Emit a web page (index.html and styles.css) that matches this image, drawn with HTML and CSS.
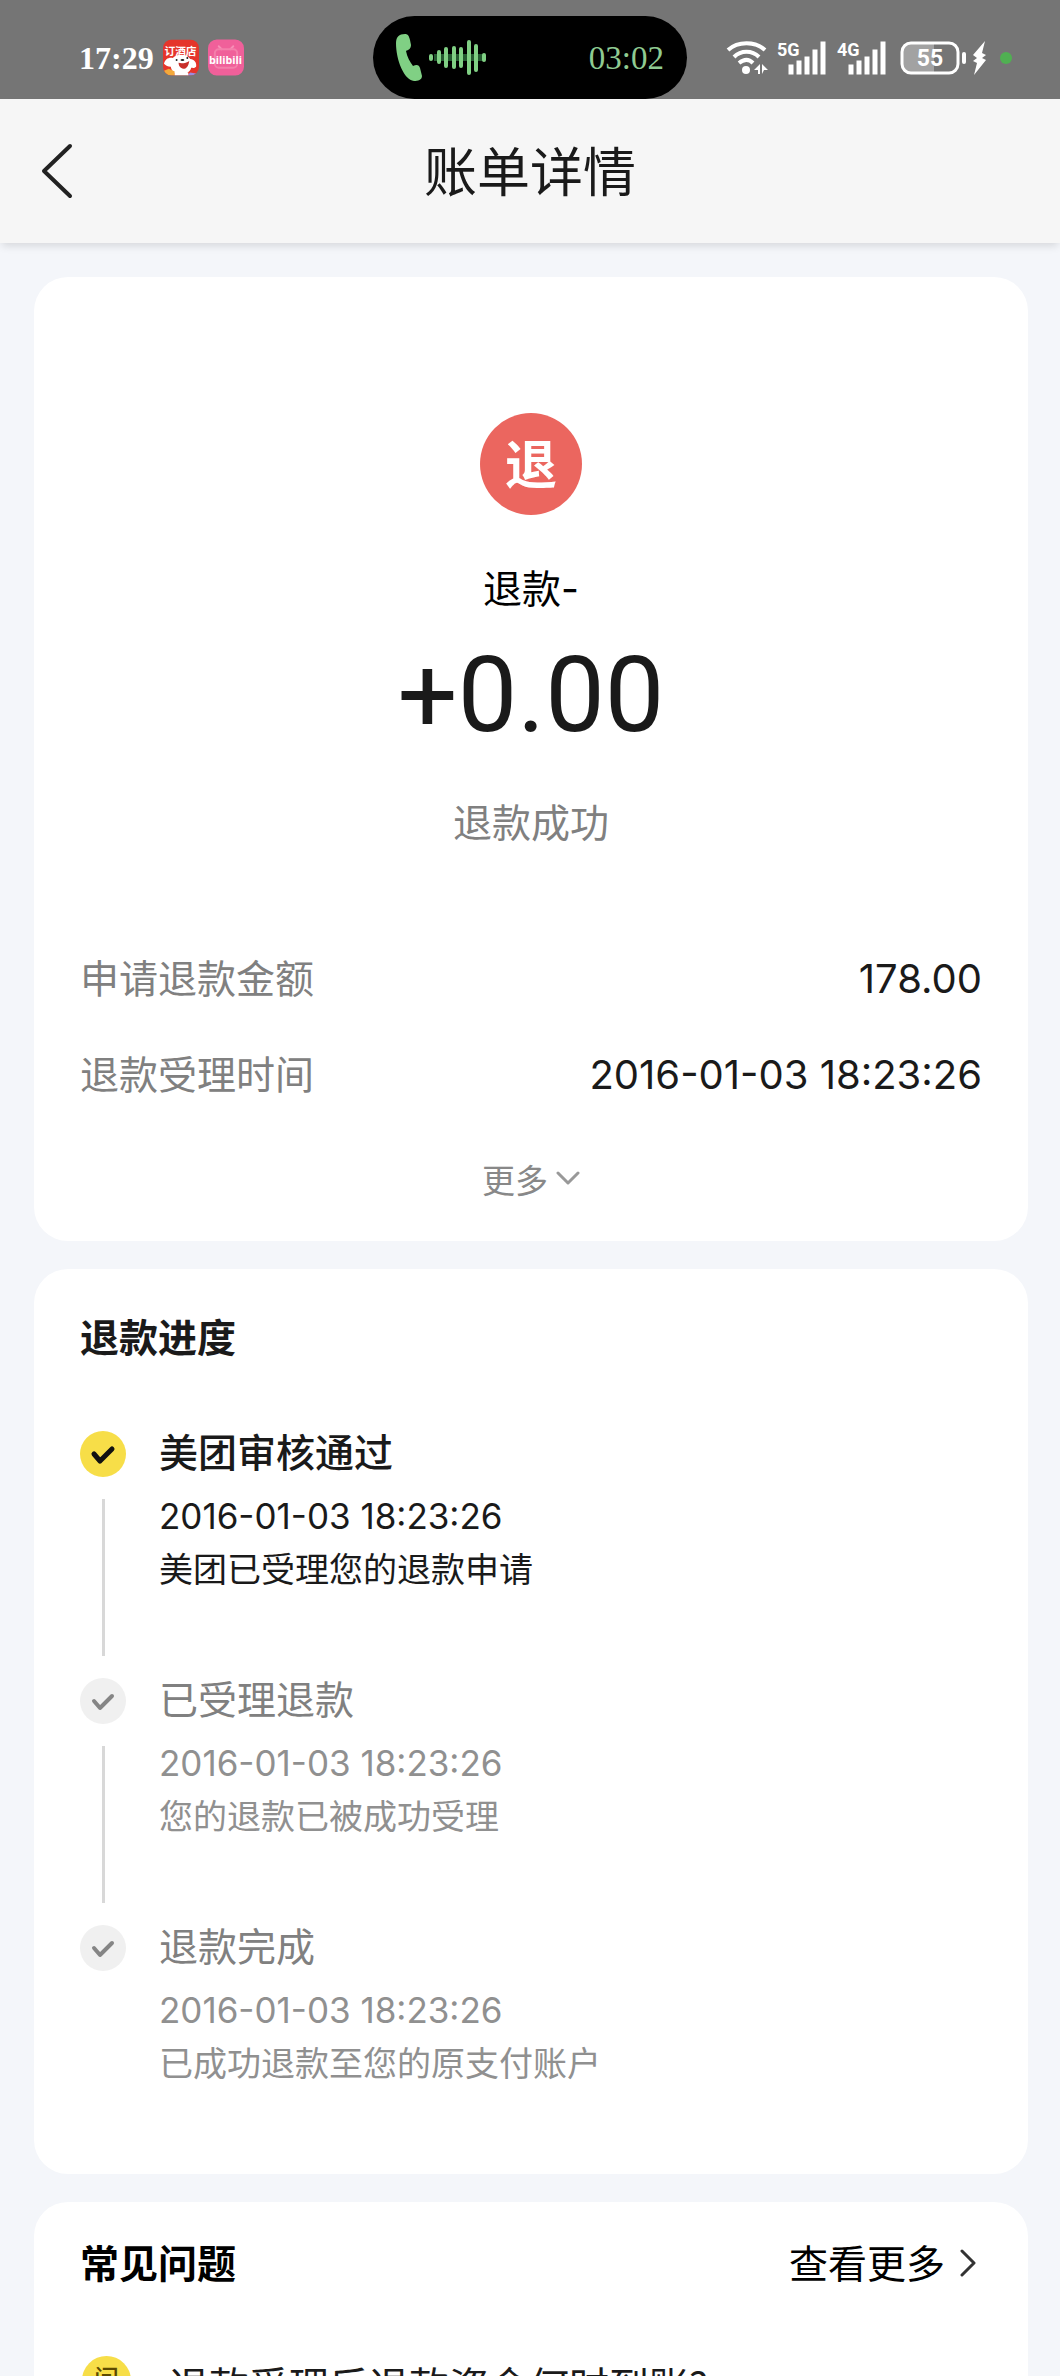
FILE: index.html
```html
<!DOCTYPE html>
<html lang="zh-CN">
<head>
<meta charset="utf-8">
<meta name="viewport" content="width=device-width, initial-scale=1">
<title>账单详情</title>
<link rel="stylesheet" href="styles.css">
</head>
<body>
<div class="app">
  <div class="status-bar">
    <div class="status-left">
      <span class="clock">17:29</span>
      <svg class="app-icon" viewBox="0 0 37 37" role="img" aria-label="订酒店">
        <defs><clipPath id="tile"><rect width="37" height="37" rx="9"/></clipPath></defs>
        <g clip-path="url(#tile)">
          <rect width="37" height="37" fill="#e5352b"/>
          <text class="tile-text" x="18" y="16" text-anchor="middle">订酒店</text>
          <path d="M1 25c1-5 5-7 9-6 5-5 15-4 18 1 4 0 7 4 6 8-2 2-4 1-5 1-1 4-5 7-11 7S9 33 8 28c-3 0-5-1-7-3z" fill="#fff"/>
          <path d="M16 24c4 1 8 0 11-2-1 6-3 8-6 8s-5-3-5-6z" fill="#c9302c"/>
          <circle cx="14" cy="21" r="1" fill="#222"/><circle cx="25" cy="19" r="1" fill="#222"/><ellipse cx="20" cy="21" rx="2" ry="1" fill="#222"/>
          <path d="M1 32l5-2 6 3v4H1z" fill="#f2a93b"/><path d="M25 37l3-3 6 1v2z" fill="#9b8be0"/>
          <path d="M12 34h14v3H12z" fill="#fff"/>
        </g>
      </svg>
      <svg class="app-icon" viewBox="0 0 37 37" role="img" aria-label="bilibili">
        <rect width="37" height="37" rx="9" fill="#f0609a"/>
        <path d="M14 10l-3-3M23 10l3-3" stroke="#f78fb6" stroke-width="2" stroke-linecap="round"/>
        <rect x="7" y="10" width="23" height="19" rx="4" fill="none" stroke="#f47fab" stroke-width="2"/>
        <text class="tile-logo" x="18" y="25" text-anchor="middle">bilibili</text>
      </svg>
    </div>
    <div class="call-pill">
      <svg class="call-icon" viewBox="0 0 91 48" aria-hidden="true">
        <path d="M0 9C0 3 3 0 9 0c3 0 4 2 5 6l1 5c0 4-3 5-5 6 1 6 4 11 7 15 4-2 6-1 7 2l2 8c0 4-4 5-8 5C8 46 0 26 0 9z" fill="#80d084"/>
        <rect x="38" y="20" width="50" height="7" fill="#24582f"/>
        <path d="M35 22v3M43 18v10M50 15v17M58 14v19M65 15v17M73 8v31M80 12v24M88 21v5" stroke="#80d084" stroke-width="4" stroke-linecap="round"/>
      </svg>
      <span class="call-time">03:02</span>
    </div>
    <div class="status-right">
      <svg class="wifi" viewBox="0 0 42 34" aria-label="Wi-Fi" role="img">
        <path d="M2 9c10-9 27-9 37 0M8 16c7-7 18-7 25 0M13 22c5-4 10-4 14 0" fill="none" stroke="#fff" stroke-width="4"/>
        <circle cx="20" cy="29" r="4" fill="#fff"/>
        <path d="M34 23v10h-2v-4h-4zM36 33V23l6 6h-4z" fill="#fff"/>
      </svg>
      <svg class="signal" viewBox="0 0 51 34" role="img" aria-label="5G">
        <text class="net" x="0" y="15">5G</text>
        <path d="M14 26v5M22 22v9M30 18v13M38 11v20M46 3v28" stroke="#fff" stroke-width="5" stroke-linecap="square"/>
      </svg>
      <svg class="signal signal-second" viewBox="0 0 51 34" role="img" aria-label="4G">
        <text class="net" x="0" y="15">4G</text>
        <path d="M14 26v5M22 22v9M30 18v13M38 11v20M46 3v28" stroke="#fff" stroke-width="5" stroke-linecap="square"/>
      </svg>
      <svg class="battery" viewBox="0 0 88 34" role="img" aria-label="55%">
        <path d="M12 1h22v32H12Q2 33 2 23V11Q2 1 12 1z" fill="#a2a2a2"/>
        <rect x="2" y="2" width="56" height="30" rx="9" fill="none" stroke="#fff" stroke-width="3"/>
        <text class="level" x="30" y="25" text-anchor="middle">55</text>
        <rect x="62" y="11" width="4" height="12" rx="2" fill="#fff"/>
        <path d="M85 0L73 14l4 3-4 3 4 2-3 12 12-15-4-2 4-3-4-2z" fill="#fff"/>
      </svg>
      <span class="privacy-dot"></span>
    </div>
  </div>

  <header class="nav">
    <button class="back" type="button" aria-label="返回">
      <svg viewBox="0 0 32 56"><path d="M29 3L3 28l26 25" fill="none" stroke="#222" stroke-width="4" stroke-linecap="round" stroke-linejoin="round"/></svg>
    </button>
    <h1 class="nav-title">账单详情</h1>
  </header>

  <main class="content">
    <section class="card summary">
      <div class="badge">退</div>
      <p class="summary-name">退款<span class="num">-</span></p>
      <p class="amount">+0.00</p>
      <p class="summary-state">退款成功</p>
      <dl class="details">
        <div class="detail"><dt>申请退款金额</dt><dd>178.00</dd></div>
        <div class="detail"><dt>退款受理时间</dt><dd>2016-01-03 18:23:26</dd></div>
      </dl>
      <button class="more" type="button">更多
        <svg viewBox="0 0 24 16"><path d="M2 2l10 10L22 2" fill="none" stroke="#999" stroke-width="3" stroke-linecap="round" stroke-linejoin="round"/></svg>
      </button>
    </section>

    <section class="card progress">
      <h2 class="card-title">退款进度</h2>
      <ol class="steps">
        <li class="step step-current">
          <div class="rail">
            <svg class="marker" viewBox="0 0 46 46"><circle cx="23" cy="23" r="23"/><path d="M14 23l6 7 12-12"/></svg>
            <span class="line"></span>
          </div>
          <div class="step-body"><h3>美团审核通过</h3><time>2016-01-03 18:23:26</time><p>美团已受理您的退款申请</p></div>
        </li>
        <li class="step">
          <div class="rail">
            <svg class="marker" viewBox="0 0 46 46"><circle cx="23" cy="23" r="23"/><path d="M14 23l6 7 12-12"/></svg>
            <span class="line"></span>
          </div>
          <div class="step-body"><h3>已受理退款</h3><time>2016-01-03 18:23:26</time><p>您的退款已被成功受理</p></div>
        </li>
        <li class="step">
          <div class="rail">
            <svg class="marker" viewBox="0 0 46 46"><circle cx="23" cy="23" r="23"/><path d="M14 23l6 7 12-12"/></svg>
          </div>
          <div class="step-body"><h3>退款完成</h3><time>2016-01-03 18:23:26</time><p>已成功退款至您的原支付账户</p></div>
        </li>
      </ol>
    </section>

    <section class="card faq">
      <div class="faq-head">
        <h2 class="card-title">常见问题</h2>
        <a class="faq-more" href="#faq">查看更多
          <svg viewBox="0 0 18 28"><path d="M3 2l12 12L3 26" fill="none" stroke="#333" stroke-width="3" stroke-linecap="round" stroke-linejoin="round"/></svg>
        </a>
      </div>
      <a class="question" href="#q1"><span class="q-mark">问</span><span class="q-text">退款受理后退款资金何时到账?</span></a>
    </section>
  </main>
</div>
</body>
</html>
```
FILE: styles.css
```css
* { box-sizing: border-box; }

body, h1, h2, h3, p, dl, dd, ol { margin: 0; padding: 0; }

body {
  background: #f4f6fa;
  color: #1a1a1a;
  font-family: "Noto Sans CJK SC", sans-serif;
  font-size: 39px;
  line-height: 50px;
}

button {
  border: 0;
  padding: 0;
  background: none;
  font: inherit;
  color: inherit;
  cursor: pointer;
}

a { color: inherit; text-decoration: none; }
svg { display: block; flex: none; }
ol { list-style: none; }

.app {
  display: flex;
  flex-direction: column;
  height: 100vh;
  overflow: hidden;
}

/* Status bar */
.status-bar {
  flex: none;
  display: grid;
  grid-template-columns: 1fr auto 1fr;
  height: 99px;
  padding-top: 16px;
  background: #757575;
  color: #fff;
}

.status-left {
  display: flex;
  align-items: center;
  gap: 9px;
  padding-left: 79px;
}

.clock, .call-time {
  font: 33px/40px "Liberation Serif", serif;
}

.clock { font-size: 32px; font-weight: 700; }
.app-icon { width: 36px; height: 37px; }

.tile-text {
  font: 700 11px "Noto Sans CJK SC", sans-serif;
  fill: #fff;
}

.tile-logo {
  font: 700 11px "Open Sans", sans-serif;
  fill: #fff;
}

.call-pill {
  display: flex;
  align-items: center;
  justify-content: space-between;
  width: 314px;
  padding: 0 23px;
  border-radius: 42px;
  background: #000;
}

.call-icon { width: 91px; height: 48px; }
.call-time { color: #8fcb92; }

.status-right {
  display: flex;
  align-items: center;
  padding-right: 48px;
  justify-content: flex-end;
}

.wifi { width: 42px; height: 34px; margin-right: 9px; }
.signal { width: 51px; height: 34px; overflow: visible; }
.signal-second { margin: 0 12px 0 9px; }
.battery { width: 88px; height: 34px; margin-right: 12px; }

.net {
  font: 700 18px Roboto, sans-serif;
  fill: #fff;
}

.level {
  font: 700 23px Roboto, sans-serif;
  fill: #fff;
}

.privacy-dot {
  width: 12px;
  height: 12px;
  border-radius: 50%;
  background: #50b052;
}

/* Title bar */
.nav {
  flex: none;
  display: grid;
  grid-template-columns: 80px 1fr 80px;
  align-items: center;
  height: 144px;
  background: #f6f6f6;
  box-shadow: 0 5px 8px -2px rgba(0, 0, 0, 0.12);
}

.back { padding-left: 41px; }
.back svg { width: 32px; height: 56px; }

.nav-title {
  padding-bottom: 4px;
  font-family: KaiTi, "AR PL UKai CN", "Noto Sans CJK SC", serif;
  font-size: 53px;
  font-weight: 400;
  line-height: 72px;
  text-align: center;
}

/* Cards */
.content {
  display: flex;
  flex-direction: column;
  gap: 28px;
  padding: 34px 32px 34px 34px;
}

.card {
  flex: none;
  padding: 0 46px;
  border-radius: 34px;
  background: #fff;
}

.card-title { font-size: 39px; font-weight: 700; }

.summary {
  display: flex;
  flex-direction: column;
  align-items: center;
  padding-top: 136px;
  padding-bottom: 39px;
}

.badge {
  width: 102px;
  height: 102px;
  border-radius: 50%;
  background: #eb665f;
  color: #fff;
  font-size: 52px;
  font-weight: 700;
  line-height: 98px;
  text-align: center;
}

.summary-name { margin-top: 46px; color: #000; }
.num { font-family: Inter, sans-serif; line-height: 1; }

.amount {
  margin-top: 24px;
  font: 400 106px/120px Roboto, sans-serif;
}

.summary-state { margin-top: 40px; color: #808080; }

.details {
  display: flex;
  flex-direction: column;
  gap: 40px;
  align-self: stretch;
  margin-top: 106px;
}

.detail {
  display: flex;
  align-items: flex-start;
  justify-content: space-between;
}

.detail dt { color: #808080; }
.detail dd { font: 40px/56px Inter, sans-serif; }

.more {
  display: flex;
  align-items: center;
  gap: 8px;
  margin-top: 53px;
  color: #888;
  font-size: 33px;
  line-height: 46px;
}

.more svg { width: 24px; height: 16px; }

/* Refund progress */
.progress { padding-top: 41px; padding-bottom: 8px; }
.steps { margin-top: 65px; }
.step { display: flex; gap: 33px; color: #909090; }

.rail {
  display: flex;
  flex-direction: column;
  align-items: center;
  padding: 6px 0 16px;
}

.marker { width: 46px; height: 46px; }
.marker circle { fill: #f0f0f0; }

.marker path {
  fill: none;
  stroke: #858585;
  stroke-width: 4;
  stroke-linecap: round;
  stroke-linejoin: round;
}

.line {
  flex: 1;
  width: 3px;
  margin-top: 22px;
  background: #d8d8d8;
}

.step-body { padding-bottom: 79px; font-size: 34px; }

.step-body h3 {
  margin-bottom: 14px;
  color: #808080;
  font-size: 39px;
  font-weight: 400;
  line-height: 50px;
}

.step-body time {
  display: block;
  font: 35px/54px Inter, sans-serif;
}

.step-current, .step-current h3 { color: #1a1a1a; }
.step-current h3 { font-weight: 500; }
.step-current .marker circle { fill: #f7de48; }
.step-current .marker path { stroke: #111; stroke-width: 5; }

/* Questions */
.faq { padding-top: 34px; padding-bottom: 46px; color: #000; }
.faq-head { display: flex; justify-content: space-between; }
.faq-more { display: flex; align-items: center; gap: 14px; padding-right: 5px; }
.faq-more svg { width: 18px; height: 28px; margin-top: 4px; }

.question {
  display: flex;
  align-items: flex-start;
  gap: 38px;
  margin-top: 70px;
  padding-left: 2px;
  color: #1a1a1a;
  font-size: 40px;
}

.q-mark {
  width: 49px;
  height: 49px;
  border-radius: 50%;
  background: #f7de48;
  color: #5c4a00;
  font-size: 25px;
  font-weight: 500;
  line-height: 42px;
  text-align: center;
}

.q-text { line-height: 56px; }
```
